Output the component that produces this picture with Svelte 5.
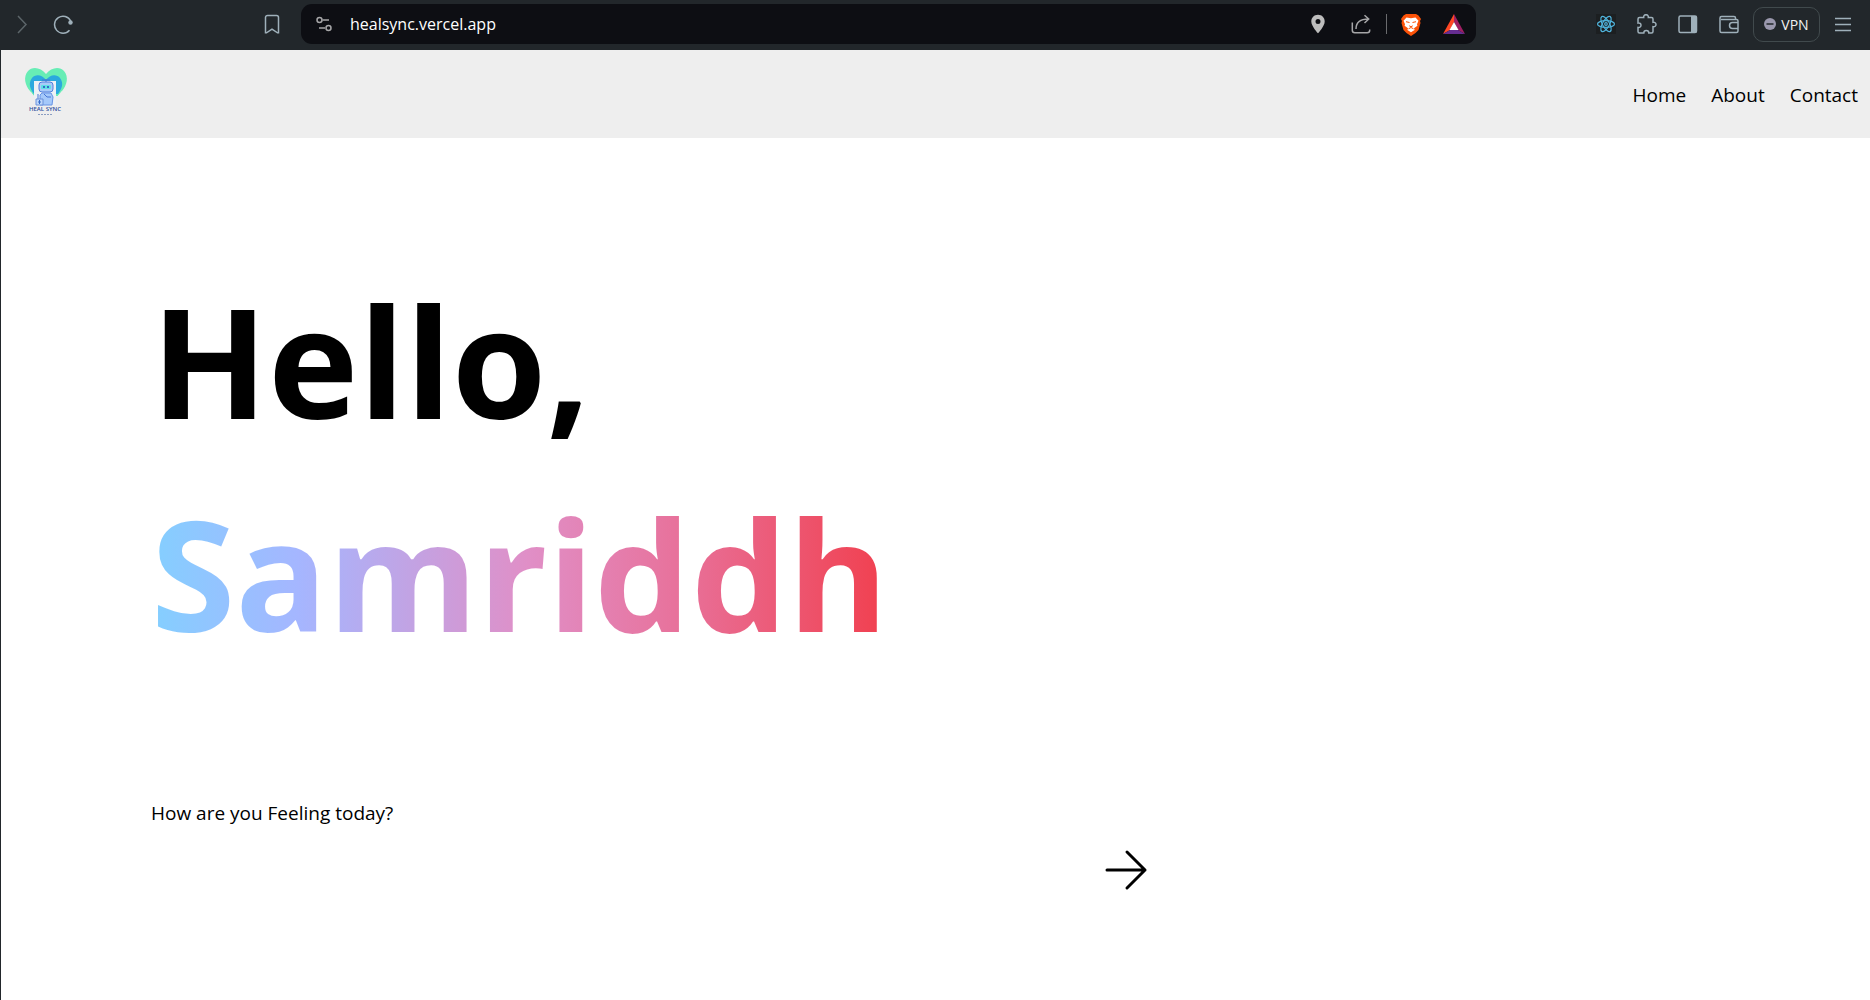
<script>
  const links = ['Home', 'About', 'Contact'];
</script>

<div class="window">
  <div class="toolbar">
    <div class="left">
      <button class="tool" aria-label="Forward">
        <svg class="dim" viewBox="0 0 20 20"><path d="M7 2l8 8.500-8 8.500" /></svg>
      </button>
      <button class="tool" aria-label="Reload">
        <svg viewBox="0 0 20 20"><path d="M16.500 16.300A8.500 8.500 0 1 1 17.700 7" /><circle class="solid" cx="17.500" cy="8.500" r="2.200" /></svg>
      </button>
      <button class="tool bookmark" aria-label="Bookmark">
        <svg viewBox="0 0 20 20"><path d="M5.500 1.500h9a2 2 0 0 1 2 2v15.300h-1L10 15.200l-5.500 3.600h-1V3.500a2 2 0 0 1 2-2z" /></svg>
      </button>
    </div>

    <div class="address">
      <button class="tool site" aria-label="Site settings">
        <svg viewBox="0 0 20 20"><circle cx="5.500" cy="6" r="2.500" /><path d="M8.500 6H15M5 14h6" /><circle cx="14.500" cy="14" r="2.500" /></svg>
      </button>
      <input class="url" aria-label="Address" value="healsync.vercel.app" />
      <div class="page-tools">
        <button class="tool" aria-label="Location">
          <svg viewBox="0 0 20 20"><path class="pin" fill-rule="evenodd" d="M10 .8c-3.900 0-6.700 2.900-6.700 6.700 0 4.800 6.700 11.800 6.700 11.800s6.700-7 6.700-11.800C16.700 3.700 13.900.8 10 .8zm0 4.200a2.500 2.500 0 1 1 0 5 2.500 2.500 0 0 1 0-5z" /></svg>
        </button>
        <button class="tool share" aria-label="Share">
          <svg viewBox="0 0 20 20"><path d="M1.300 8.500v7.700a2.500 2.500 0 0 0 2.500 2.500h12.400a2.500 2.500 0 0 0 2.500-2.500v-.7M5 15c0-6 3.500-10 12.500-10M13.500 1.200L17.700 5l-4.200 4" /></svg>
        </button>
        <span class="divider"></span>
        <button class="tool shield" aria-label="Brave Shields">
          <svg viewBox="0 0 20 23">
            <path fill="#fb5208" d="M5 1h10l2.500 1.500L20 6l-1 2 .5 2-2 7-3 3-4.500 3L5.500 20l-3-3-2-7L1 8 0 6l2.500-3.500z" />
            <path fill="#fff" d="M5.500 4.500l4.500.8 4.500-.8 3 3.200-1.500 3.500.4 1.500-3.400 2.600.6 1.700L10 19.200 6.400 17l.6-1.700-3.400-2.600.4-1.500-1.500-3.500z" />
            <path fill="none" stroke="#fb5208" stroke-width="1" d="M5 8.700l3.500.8M15 8.700l-3.500.8M8.200 12.800l1.800.9 1.800-.9M7.500 15.800l2.500-1.300 2.500 1.300" />
          </svg>
        </button>
        <button class="tool rewards" aria-label="Brave Rewards">
          <svg viewBox="0 0 22 20"><path fill="#ff4724" d="M11 0L0 20l7-4 4-8z" /><path fill="#9e1f63" d="M11 0l11 20-7-4-4-8z" /><path fill="#662d91" d="M0 20h22l-7-4H7z" /><path fill="#fff" d="M11 8l4.500 8h-9z" /></svg>
        </button>
      </div>
    </div>

    <div class="right">
      <button class="tool react" aria-label="React tools">
        <svg viewBox="0 0 20 20">
          <ellipse cx="10" cy="10" rx="8.500" ry="3.400" />
          <ellipse cx="10" cy="10" rx="8.500" ry="3.400" transform="rotate(60 10 10)" />
          <ellipse cx="10" cy="10" rx="8.500" ry="3.400" transform="rotate(120 10 10)" />
          <circle cx="10" cy="10" r="1.300" />
        </svg>
      </button>
      <button class="tool" aria-label="Extensions">
        <svg viewBox="0 0 20 20"><path d="M2.500 3.500h4.200c-.3-1.800.8-2.800 2.300-2.800s2.600 1 2.300 2.800h3.200a1.500 1.500 0 0 1 1.500 1.500v3.300c1.800-.3 3 .8 3 2.200s-1.200 2.500-3 2.200v4.800a1.500 1.500 0 0 1-1.500 1.500h-2.700c0-1.500-1-2.500-2.500-2.500s-2.500 1-2.500 2.500H2.500A1.500 1.500 0 0 1 1 17.500v-4c1.800.3 3-.8 3-2.300S2.800 8.700 1 9V5a1.500 1.500 0 0 1 1.500-1.500z" /></svg>
      </button>
      <button class="tool" aria-label="Sidebar">
        <svg viewBox="0 0 20 20"><rect x="1" y="2" width="17.500" height="16.500" rx="1.500" /><path class="solid" d="M13 2h5.500v16.500H13z" /></svg>
      </button>
      <button class="tool" aria-label="Wallet">
        <svg viewBox="0 0 20 20"><path d="M16.500 5.500V4A1.500 1.500 0 0 0 15 2.500H2.500A1.500 1.500 0 0 0 1 4v13a1.500 1.500 0 0 0 1.500 1.500h15A1.500 1.500 0 0 0 19 17V7a1.500 1.500 0 0 0-1.500-1.500H2M19 8.500h-5.500a3 3 0 0 0 0 6H19" /></svg>
      </button>
      <button class="vpn">
        <svg viewBox="0 0 12 12"><circle cx="6" cy="6" r="6" fill="#9a98ad" /><path d="M2.500 6h7" stroke="#22272b" stroke-width="1.500" /></svg>
        VPN
      </button>
      <button class="tool" aria-label="Menu">
        <svg viewBox="0 0 20 20"><path d="M2 4.500h16M2 10.500h16M2 16.500h16" /></svg>
      </button>
    </div>
  </div>

  <div class="page">
    <header>
      <a class="logo" href="#home" aria-label="Heal Sync">
        <svg viewBox="0 0 52 58">
          <path fill="#67edb5" d="M26 12C21 5 12 4 8 9c-5 6-3 14 2 20l5 6h22l5-6c5-6 7-14 2-20-4-5-13-4-18 3z" />
          <path fill="#2ba9de" d="M26 18c-4-6-11-6-14-2-4 5-2 11 2 16h24c4-5 6-11 2-16-3-4-10-4-14 2z" />
          <path fill="#edf1f5" d="M14 19h22v15h8v9H8v-9h6z" />
          <path fill="#eee" d="M8 32l3-2 4 6v7H8zM36 36l6-7 3 1v13h-9z" />
          <rect x="19" y="20" width="14" height="10" rx="3" fill="#a9cbf8" stroke="#527fdc" />
          <rect x="21" y="23" width="10" height="4" rx="1" fill="#5ee1e4" />
          <path stroke="#356bc9" stroke-width="2" d="M23 25h2M27 25h2" />
          <path fill="#a5c9fa" stroke="#6793e5" d="M22 31h9l2 4-1 8H20V33z" />
          <path fill="none" stroke="#4776d5" d="M26 17v3M22 18h8M24 32l3 3h4M18 32v5" />
          <path fill="#bdd7fa" stroke="#6b91da" d="M16 37h7v6h-7z" />
          <path stroke="#356bc9" d="M19.500 38v4M18 40h3" />
          <text x="25" y="49" text-anchor="middle">HEAL SYNC</text>
          <path stroke="#8b9ec2" stroke-dasharray="2 1" d="M18 52.500h15" />
        </svg>
      </a>
      <nav>
        {#each links as link}
          <a href={'#' + link.toLowerCase()}>{link}</a>
        {/each}
      </nav>
    </header>

    <main>
      <h1>
        <span class="hello">Hello,</span>
        <span class="name">Samriddh</span>
      </h1>
      <p>How are you Feeling today?</p>
      <div class="actions">
        <button class="next" aria-label="Next">
          <svg viewBox="0 0 48 48"><path d="M5 24h38M25 6l18 18-18 18" /></svg>
        </button>
      </div>
    </main>
  </div>
</div>

<style>
  :global(body) {
    margin: 0;
    background: #fff;
  }

  .window {
    display: flex;
    flex-direction: column;
    min-height: 100vh;
    font-family: 'Open Sans', 'Noto Sans', sans-serif;
    color: #000;
  }

  button {
    padding: 0;
    border: 0;
    background: none;
    font: inherit;
    color: inherit;
  }

  svg {
    display: block;
    width: 100%;
    height: 100%;
  }

  .toolbar {
    display: flex;
    box-sizing: border-box;
    height: 50px;
    padding: 4px 17px 6px 11px;
    background: #22272b;
  }

  .left,
  .right,
  .address,
  .page-tools {
    display: flex;
    align-items: center;
  }

  .left {
    flex: 0 0 271px;
    gap: 22px;
    margin-right: 19px;
  }

  .bookmark {
    margin-left: auto;
  }

  .tool {
    flex: none;
    width: 20px;
    height: 20px;
  }

  .tool svg {
    fill: none;
    stroke: #9fb0ba;
    stroke-width: 1.5;
  }

  .tool .dim {
    stroke: #5c6569;
  }

  .tool .solid {
    fill: #9fb0ba;
    stroke: none;
  }

  .address {
    flex: 1;
    min-width: 0;
    padding: 0 11px 0 13px;
    border-radius: 11px;
    background: #0d0e13;
  }

  .address .tool svg {
    stroke: #a6a6a8;
  }

  .url {
    flex: 1;
    min-width: 0;
    margin-left: 16px;
    padding: 0;
    border: 0;
    outline: 0;
    background: none;
    font: 16px/24px 'Open Sans', 'Noto Sans', sans-serif;
    color: #fff;
  }

  .page-tools .share {
    margin: 0 15px 0 23px;
  }

  .tool .pin {
    fill: #bdbdbd;
    stroke: none;
  }

  .divider {
    width: 1px;
    height: 20px;
    background: #6a6b6e;
  }

  .page-tools .shield {
    height: 23px;
    margin: 0 22px 0 14px;
  }

  .page-tools .rewards {
    width: 22px;
  }

  .page-tools .shield svg,
  .page-tools .rewards svg {
    stroke: none;
  }

  .right {
    gap: 21px;
    margin-left: 120px;
  }

  .react {
    background: #1c1f21;
  }

  .react svg {
    stroke: #4fb3dc;
    stroke-width: 1.2;
  }

  .vpn {
    display: flex;
    align-items: center;
    justify-content: center;
    gap: 5px;
    box-sizing: border-box;
    width: 67px;
    height: 35px;
    margin: 0 -8px 0 -7px;
    border: 1px solid #414a4d;
    border-radius: 10px;
    font-size: 14px;
    color: #f2f2f2;
  }

  .vpn svg {
    flex: none;
    width: 12px;
    height: 12px;
  }

  .page {
    flex: 1;
    border-left: 1px solid #22272b;
  }

  header {
    display: flex;
    align-items: center;
    justify-content: space-between;
    height: 88px;
    padding: 0 12px 0 19px;
    background: #eee;
  }

  .logo {
    width: 52px;
    height: 58px;
    margin-bottom: 6px;
  }

  .logo text {
    font: 600 6px 'Open Sans', sans-serif;
    fill: #2d4f9e;
  }

  nav {
    display: flex;
    gap: 25px;
    padding-top: 2px;
  }

  nav a {
    font-size: 19px;
    line-height: 27px;
    color: #000;
    text-decoration: none;
  }

  main {
    display: flex;
    flex-direction: column;
    padding: 115px 0 0 150px;
  }

  h1 {
    display: flex;
    flex-direction: column;
    align-items: flex-start;
    margin: 0;
    font-size: 153px;
    font-weight: 700;
    line-height: 213px;
  }

  .name {
    background: linear-gradient(90deg, #84cfff 0%, #a5b6ff 20%, #e08fc7 51%, #e8719a 72%, #f13f4e 100%);
    -webkit-background-clip: text;
    background-clip: text;
    color: transparent;
  }

  p {
    margin: 121px 0 0;
    font-size: 19px;
    line-height: 27px;
  }

  .actions {
    padding: 19px 0 0 55%;
  }

  .next {
    width: 48px;
    height: 48px;
    margin-left: 6px;
  }

  .next svg {
    fill: none;
    stroke: #000;
    stroke-width: 3;
    stroke-linecap: round;
    stroke-linejoin: round;
  }
</style>
